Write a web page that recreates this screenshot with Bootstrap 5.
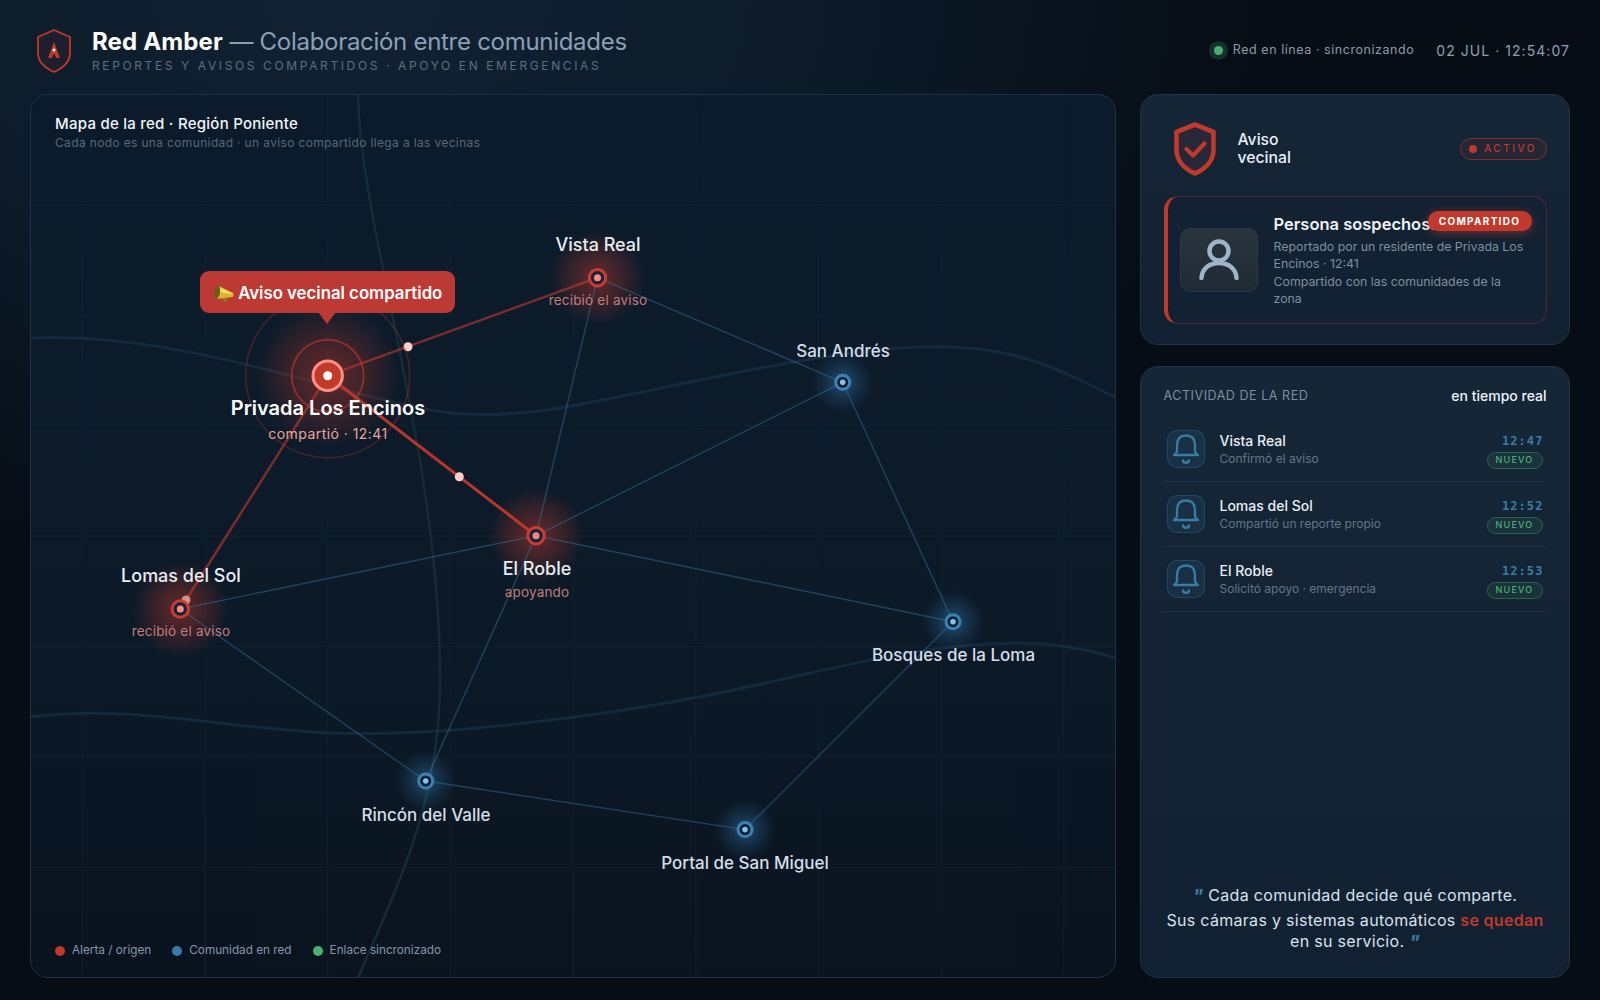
<!DOCTYPE html>
<html lang="es">
<head>
  <meta charset="UTF-8">
  <title>Red Amber</title>
  <link href="https://cdn.jsdelivr.net/npm/bootstrap@5.3.0/dist/css/bootstrap.min.css" rel="stylesheet">
  <style>
    html, body { height: 100%; }
    body {
      font-family: Inter, "Liberation Sans", sans-serif;
      color: #e8eef4;
      background: radial-gradient(ellipse 900px 560px at 22% 0%, #122233 0%, #0c1a28 55%, transparent 100%), #070d15;
      overflow: hidden;
    }
    .shell { width: 1600px; height: 1000px; padding: 0 30px 22px; }
    .topbar { height: 94px; padding-top: 6px; }
    .logo-box { width: 36px; margin: 2px 20px 0 6px; }
    .app-title { font-size: 24px; line-height: 30px; color: #8ba0b6; font-weight: 400; margin: 0; letter-spacing: -.29px; }
    .app-title b { color: #fff; font-weight: 700; letter-spacing: .15px; }
    .app-sub { font-size: 12px; line-height: 16px; letter-spacing: 2.62px; color: #5b6f83; margin-top: 1px; }
    .live-dot { width: 19px; height: 19px; border-radius: 50%; background: rgba(76,175,114,.22); margin-right: 5px; }
    .live-dot::after { content: ""; width: 9px; height: 9px; border-radius: 50%; background: #4caf72; }
    .live-txt { font-size: 12.5px; letter-spacing: .55px; color: #8a9bab; margin-right: 22px; }
    .clock { font-size: 14px; letter-spacing: 1.05px; color: #8fa0b0; }

    .main-row { height: 884px; gap: 24px; }
    .map-panel {
      width: 1086px; height: 884px; position: relative; overflow: hidden;
      border: 1px solid #1d3245; border-radius: 18px;
      background: linear-gradient(180deg, #0d1c2c 0%, #0c1a28 60%, #0a141f 100%);
    }
    .map-svg { position: absolute; left: -1px; top: -1px; width: 1086px; height: 884px; }
    .map-head { position: absolute; left: 24px; top: 18px; }
    .map-title { font-size: 15px; line-height: 22px; font-weight: 500; letter-spacing: .25px; color: #f2f5f8; }
    .map-sub { font-size: 12px; line-height: 16px; letter-spacing: .35px; color: #56687a; }
    .map-legend { position: absolute; left: 24px; bottom: 17px; gap: 21px; font-size: 11.75px; color: #8496a8; }
    .leg-dot { width: 10px; height: 10px; border-radius: 50%; margin-right: 7px; }

    .pin-label { position: absolute; transform: translateX(-50%); text-align: center; white-space: nowrap; }
    .pin-name { font-size: 17px; line-height: 22px; font-weight: 500; color: #d5dee8; }
    .pin-name.hot { font-size: 18px; color: #e8edf3; }
    .pin-name.main { font-size: 20px; line-height: 24px; font-weight: 600; color: #fff; }
    .pin-note { font-size: 13.5px; line-height: 18px; letter-spacing: .2px; color: #c27c7a; }
    .pin-note.main { font-size: 14px; letter-spacing: .45px; color: #e8a5a0; }
    .lb-encinos { left: 297px; top: 301px; }
    .lb-encinos .pin-note { margin-top: 5px; }
    .lb-vista-name { left: 567px; top: 139px; }
    .lb-vista-note { left: 567px; top: 196px; }
    .lb-lomas-name { left: 150px; top: 470px; }
    .lb-lomas-note { left: 150px; top: 527px; }
    .lb-roble { left: 506px; top: 463px; }
    .lb-roble .pin-note { margin-top: 3px; }
    .lb-andres { left: 812px; top: 245px; }
    .lb-bosques { left: 922.5px; top: 549px; }
    .lb-rincon { left: 395px; top: 709px; }
    .lb-portal { left: 714px; top: 757px; }

    .callout {
      position: absolute; left: 169px; top: 176px; width: 255px; height: 41.5px; padding-top: 3px; gap: 4.5px;
      background: #bd3a34; border-radius: 9px; color: #fff;
      font-size: 16.75px; font-weight: 600;
    }
    .callout::after {
      content: ""; position: absolute; left: 118px; top: 41px;
      border-left: 9px solid transparent; border-right: 9px solid transparent; border-top: 12px solid #bd3a34;
    }

    .side-col { width: 430px; gap: 21px; }
    .side-panel { border: 1px solid #1e3549; border-radius: 18px; background: linear-gradient(180deg, #152637 0%, #122132 100%); }
    .alert-panel { height: 251px; padding: 0 22.5px; }
    .alert-top { height: 101px; padding-top: 6px; }
    .shield-box { width: 42px; margin: 0 22px 0 10px; }
    .alert-name { font-size: 15.75px; line-height: 18px; font-weight: 500; color: #e8eef4; }
    .pill-active {
      height: 22px; width: 87px; border: 1px solid #7c2f33; border-radius: 11px; background: rgba(192,57,43,.1);
      font-size: 10px; font-weight: 500; letter-spacing: 2.5px; color: #c0392b;
    }
    .pill-active i { width: 8px; height: 8px; border-radius: 50%; background: #c0392b; margin-right: 7px; }
    .report-box {
      position: relative; height: 128px; border: 1px solid #4d2a31; border-left: 4.3px solid #c0392b; border-radius: 14px;
      padding: 0 12px 0 12px; background: #132233;
    }
    .face-box {
      width: 78px; height: 64px; border-radius: 10px; margin-right: 16px;
      background: linear-gradient(180deg, #29343f, #1f2a35); border: 1px solid #2b3845;
    }
    .report-title { font-size: 16.5px; line-height: 22px; font-weight: 600; color: #eef2f6; margin-bottom: 3px; white-space: nowrap; }
    .report-txt { font-size: 12.35px; line-height: 17.5px; color: #7d8e9f; max-width: 252px; }
    .pill-shared {
      position: absolute; left: 260px; top: 14px; width: 104px; height: 20px; border-radius: 10px;
      background: #c0392b; color: #fff; font-size: 10px; font-weight: 700; letter-spacing: 1.3px;
      box-shadow: 0 2px 10px rgba(192,57,43,.55);
    }

    .feed-panel { height: 612px; padding: 0 22.5px; }
    .feed-head { height: 50px; padding-top: 9px; }
    .feed-label { font-size: 12.5px; letter-spacing: .55px; color: #7d8e9f; }
    .feed-live { font-size: 14px; font-weight: 500; color: #eef2f6; margin-bottom: 2px; }
    .feed-list { margin: 0; padding: 0; list-style: none; }
    .feed-row { height: 65px; border-bottom: 1px solid #1e3346; padding: 0 4px 0 3px; }
    .bell-box {
      width: 38px; height: 38px; border-radius: 10px; margin-right: 15px;
      background: rgba(58,124,165,.14); border: 1px solid rgba(58,124,165,.3);
    }
    .feed-name { font-size: 14px; line-height: 18px; font-weight: 500; color: #e8eef4; }
    .feed-note { font-size: 12px; line-height: 17px; color: #637587; }
    .feed-time { font-family: "DejaVu Sans Mono", "Liberation Mono", monospace; font-size: 12px; line-height: 22px; font-weight: 700; letter-spacing: 1.1px; color: #3a7ca5; text-align: right; margin-right: -1px; }
    .pill-new {
      height: 17px; width: 56px; border-radius: 9px; border: 1px solid #2b6549; background: rgba(76,175,114,.1);
      color: #4caf72; font-size: 9px; font-weight: 500; letter-spacing: 1.2px;
    }
    .quote-box { margin-top: auto; padding-bottom: 25px; text-align: center; font-size: 16px; line-height: 21px; letter-spacing: .3px; color: #d8e2ec; }
    .quote-box .first { margin-bottom: 4px; }
    .quote-box em { color: #3a7ca5; font-size: 19px; font-weight: 700; line-height: 0; vertical-align: -2px; }
    .quote-box strong { color: #c0392b; font-weight: 600; }
  </style>
</head>
<body>
  <svg width="0" height="0" class="position-absolute">
    <symbol id="bell" viewBox="1 1 36 36">
      <path d="M10 21 V15 C10 9 13 5.5 19 5.5 C25 5.5 28 9 28 15 V21 C28 23 30 24 31 25 H7 C8 24 10 23 10 21 Z" fill="none" stroke="#3a7ca5" stroke-width="2.3" stroke-linejoin="round"/>
      <path d="M16 30.5 C16.5 33.5 21.5 33.5 22 30.5" fill="none" stroke="#3a7ca5" stroke-width="2.4" stroke-linecap="round"/>
    </symbol>
  </svg>
  <div class="shell d-flex flex-column">

    <header class="topbar d-flex align-items-center justify-content-between">
      <div class="d-flex align-items-center">
        <div class="logo-box">
          <svg width="36" height="44" viewBox="0 0 36 44">
            <path d="M18 1 L34 8 V24 C34 33 27 39 18 43 C9 39 2 33 2 24 V8 Z" fill="#1e1f2d" stroke="#c0392b" stroke-width="1.8" stroke-linejoin="round"/>
            <path d="M18 13 L23.8 29 H20.3 L18 24.5 L15.7 29 H12.2 Z" fill="#c0392b"/>
            <circle cx="18" cy="21" r="1.5" fill="#fff"/>
          </svg>
        </div>
        <div>
          <h1 class="app-title"><b>Red Amber</b> — Colaboración entre comunidades</h1>
          <div class="app-sub">REPORTES Y AVISOS COMPARTIDOS · APOYO EN EMERGENCIAS</div>
        </div>
      </div>
      <div class="d-flex align-items-center">
        <span class="live-dot d-flex align-items-center justify-content-center"></span>
        <span class="live-txt">Red en línea · sincronizando</span>
        <span class="clock">02 JUL · 12:54:07</span>
      </div>
    </header>

    <div class="main-row d-flex">
      <section class="map-panel">
        <svg class="map-svg" viewBox="0 0 1086 884">
          <defs>
            <radialGradient id="glowRed">
              <stop offset="0" stop-color="#c0392b" stop-opacity=".5"/>
              <stop offset=".55" stop-color="#c0392b" stop-opacity=".24"/>
              <stop offset="1" stop-color="#c0392b" stop-opacity="0"/>
            </radialGradient>
            <radialGradient id="glowBlue">
              <stop offset="0" stop-color="#3a8cc8" stop-opacity=".45"/>
              <stop offset=".55" stop-color="#3a8cc8" stop-opacity=".17"/>
              <stop offset="1" stop-color="#3a8cc8" stop-opacity="0"/>
            </radialGradient>
          </defs>

          <!-- grid -->
          <g stroke="#1a2e40" stroke-width="1" opacity=".34">
            <path d="M52.5 0V884M175 0V884M297.7 0V884M420.4 0V884M543 0V884M665.8 0V884M788.5 0V884M911.2 0V884M1033.9 0V884"/>
            <path d="M0 110.5H1086M0 221H1086M0 331.5H1086M0 442H1086M0 552.5H1086M0 663H1086M0 773.5H1086"/>
          </g>

          <!-- roads -->
          <path d="M328 0 C330 136 410 356 410 586 C410 706 370 786 328 884" fill="none" stroke="#1b3a3c" stroke-width="2.5" opacity=".6"/>
          <path d="M0 244 C100 240 200 265 300 292 S430 325 500 318 S700 275 830 258 S1010 265 1086 304" fill="none" stroke="#1c3d58" stroke-width="3" opacity=".45"/>
          <path d="M0 623 C100 610 200 635 300 639 S560 625 684 600 S880 550 990 549 C1030 549 1060 556 1086 564" fill="none" stroke="#1c3d58" stroke-width="3" opacity=".45"/>

          <!-- glows -->
          <circle cx="297.7" cy="281.7" r="72" fill="url(#glowRed)"/>
          <circle cx="567.5" cy="183.7" r="47" fill="url(#glowRed)"/>
          <circle cx="150.3" cy="515" r="48" fill="url(#glowRed)"/>
          <circle cx="506" cy="441.7" r="48" fill="url(#glowRed)"/>
          <circle cx="812.7" cy="288.3" r="31" fill="url(#glowBlue)"/>
          <circle cx="923" cy="527.7" r="31" fill="url(#glowBlue)"/>
          <circle cx="395.7" cy="687" r="31" fill="url(#glowBlue)"/>
          <circle cx="715" cy="735.6" r="31" fill="url(#glowBlue)"/>

          <!-- links -->
          <g stroke="#3a7ca5" stroke-width="1.4" opacity=".42">
            <line x1="567.5" y1="183.7" x2="812.7" y2="288.3"/>
            <line x1="567.5" y1="183.7" x2="506" y2="441.7"/>
            <line x1="812.7" y1="288.3" x2="506" y2="441.7"/>
            <line x1="812.7" y1="288.3" x2="923" y2="527.7"/>
            <line x1="506" y1="441.7" x2="923" y2="527.7"/>
            <line x1="506" y1="441.7" x2="150.3" y2="515"/>
            <line x1="506" y1="441.7" x2="395.7" y2="687"/>
            <line x1="150.3" y1="515" x2="395.7" y2="687"/>
            <line x1="395.7" y1="687" x2="715" y2="735.6"/>
            <line x1="715" y1="735.6" x2="923" y2="527.7"/>
          </g>
          <line x1="297.7" y1="281.7" x2="567.5" y2="183.7" stroke="#c0392b" stroke-width="2.5" opacity=".62"/>
          <line x1="297.7" y1="281.7" x2="150.3" y2="515" stroke="#c0392b" stroke-width="2.5" opacity=".62"/>
          <line x1="297.7" y1="281.7" x2="506" y2="441.7" stroke="#c0392b" stroke-width="3" opacity=".95"/>
          <circle cx="378" cy="252.7" r="4.5" fill="#ffd0cc"/>
          <circle cx="429.3" cy="382.7" r="4.5" fill="#ffd0cc"/>
          <circle cx="156" cy="506" r="4.5" fill="#ffb0a8" opacity=".75"/>

          <!-- origin node -->
          <circle cx="297.7" cy="281.7" r="82" fill="none" stroke="#c0392b" stroke-width="1.5" opacity=".32"/>
          <circle cx="297.7" cy="281.7" r="36" fill="none" stroke="#c0392b" stroke-width="2" opacity=".6"/>
          <circle cx="297.7" cy="281.7" r="14.7" fill="#c0392b" stroke="#ff8f85" stroke-width="3"/>
          <circle cx="297.7" cy="281.7" r="4.5" fill="#fff"/>

          <!-- red nodes -->
          <g fill="#13263c" stroke="#cf3a30" stroke-width="3">
            <circle cx="567.5" cy="183.7" r="8.2"/>
            <circle cx="150.3" cy="515" r="8.2"/>
            <circle cx="506" cy="441.7" r="8.2"/>
          </g>
          <g fill="#ff8a80">
            <circle cx="567.5" cy="183.7" r="3.5"/>
            <circle cx="150.3" cy="515" r="3.5"/>
            <circle cx="506" cy="441.7" r="3.5"/>
          </g>

          <!-- blue nodes -->
          <g fill="#0e1d2c" stroke="#3a82b5" stroke-width="3">
            <circle cx="812.7" cy="288.3" r="7"/>
            <circle cx="923" cy="527.7" r="7"/>
            <circle cx="395.7" cy="687" r="7"/>
            <circle cx="715" cy="735.6" r="7"/>
          </g>
          <g fill="#7cc6f0">
            <circle cx="812.7" cy="288.3" r="2.8"/>
            <circle cx="923" cy="527.7" r="2.8"/>
            <circle cx="395.7" cy="687" r="2.8"/>
            <circle cx="715" cy="735.6" r="2.8"/>
          </g>
        </svg>

        <div class="map-head">
          <div class="map-title">Mapa de la red · Región Poniente</div>
          <div class="map-sub">Cada nodo es una comunidad · un aviso compartido llega a las vecinas</div>
        </div>

        <div class="callout d-flex align-items-center justify-content-center">
          <svg width="21" height="17" viewBox="0 0 21 17" class="flex-shrink-0">
            <path d="M9 12 L13 11.5 L14.5 16 L11 16.5 Z" fill="#8f7a22"/>
            <path d="M5 0.5 L20 8 C21 9 20.5 11.5 19.5 12 L4 14 Z" fill="#d9b52c"/>
            <path d="M6 2 L20 8.6 L19.5 9.6 L6 7 Z" fill="#f3dc62"/>
            <ellipse cx="4.2" cy="7.2" rx="2.8" ry="6.9" transform="rotate(8 4.2 7.2)" fill="#6e5a1c"/>
          </svg>
          <span>Aviso vecinal compartido</span>
        </div>

        <div class="pin-label lb-encinos"><div class="pin-name main">Privada Los Encinos</div><div class="pin-note main">compartió · 12:41</div></div>
        <div class="pin-label lb-vista-name"><div class="pin-name hot">Vista Real</div></div>
        <div class="pin-label lb-vista-note"><div class="pin-note">recibió el aviso</div></div>
        <div class="pin-label lb-lomas-name"><div class="pin-name hot">Lomas del Sol</div></div>
        <div class="pin-label lb-lomas-note"><div class="pin-note">recibió el aviso</div></div>
        <div class="pin-label lb-roble"><div class="pin-name hot">El Roble</div><div class="pin-note">apoyando</div></div>
        <div class="pin-label lb-andres"><div class="pin-name">San Andrés</div></div>
        <div class="pin-label lb-bosques"><div class="pin-name">Bosques de la Loma</div></div>
        <div class="pin-label lb-rincon"><div class="pin-name">Rincón del Valle</div></div>
        <div class="pin-label lb-portal"><div class="pin-name">Portal de San Miguel</div></div>

        <div class="map-legend d-flex align-items-center">
          <span class="d-flex align-items-center"><i class="leg-dot" style="background:#c0392b"></i>Alerta / origen</span>
          <span class="d-flex align-items-center"><i class="leg-dot" style="background:#3a7ca5"></i>Comunidad en red</span>
          <span class="d-flex align-items-center"><i class="leg-dot" style="background:#4caf72"></i>Enlace sincronizado</span>
        </div>
      </section>

      <aside class="side-col d-flex flex-column">
        <section class="side-panel alert-panel">
          <div class="alert-top d-flex align-items-center justify-content-between">
            <div class="d-flex align-items-center">
              <div class="shield-box">
                <svg width="42" height="54" viewBox="0 0 42 54">
                  <path d="M21 2.5 L39.5 10 V28 C39.5 39 31 47 21 51.5 C11 47 2.5 39 2.5 28 V10 Z" fill="#262838" stroke="#c0392b" stroke-width="4.6" stroke-linejoin="round"/>
                  <path d="M12.5 27 L19 33.5 L30.5 21.5" fill="none" stroke="#c0392b" stroke-width="4.2" stroke-linecap="round" stroke-linejoin="round"/>
                </svg>
              </div>
              <div class="alert-name">Aviso<br>vecinal</div>
            </div>
            <div class="pill-active d-flex align-items-center justify-content-center"><i></i>ACTIVO</div>
          </div>

          <div class="report-box d-flex align-items-center">
            <div class="face-box d-flex align-items-center justify-content-center flex-shrink-0">
              <svg width="44" height="48" viewBox="0 0 44 48">
                <circle cx="22" cy="15" r="9.5" fill="none" stroke="#9fb4c8" stroke-width="4.5"/>
                <path d="M4.5 42 C5 33 12 27 22 27 C32 27 39 33 39.5 42" fill="none" stroke="#9fb4c8" stroke-width="4.5" stroke-linecap="round"/>
              </svg>
            </div>
            <div>
              <div class="report-title">Persona sospechosa</div>
              <div class="report-txt">Reportado por un residente de Privada Los Encinos · 12:41<br>Compartido con las comunidades de la zona</div>
            </div>
            <div class="pill-shared d-flex align-items-center justify-content-center">COMPARTIDO</div>
          </div>
        </section>

        <section class="side-panel feed-panel d-flex flex-column">
          <div class="feed-head d-flex align-items-center justify-content-between">
            <span class="feed-label">ACTIVIDAD DE LA RED</span>
            <span class="feed-live">en tiempo real</span>
          </div>
          <ul class="feed-list">
            <li class="feed-row d-flex align-items-center">
              <div class="bell-box d-flex align-items-center justify-content-center flex-shrink-0"><svg width="36" height="36"><use href="#bell"/></svg></div>
              <div class="flex-grow-1">
                <div class="feed-name">Vista Real</div>
                <div class="feed-note">Confirmó el aviso</div>
              </div>
              <div class="d-flex flex-column align-items-end">
                <div class="feed-time">12:47</div>
                <div class="pill-new d-flex align-items-center justify-content-center">NUEVO</div>
              </div>
            </li>
            <li class="feed-row d-flex align-items-center">
              <div class="bell-box d-flex align-items-center justify-content-center flex-shrink-0"><svg width="36" height="36"><use href="#bell"/></svg></div>
              <div class="flex-grow-1">
                <div class="feed-name">Lomas del Sol</div>
                <div class="feed-note">Compartió un reporte propio</div>
              </div>
              <div class="d-flex flex-column align-items-end">
                <div class="feed-time">12:52</div>
                <div class="pill-new d-flex align-items-center justify-content-center">NUEVO</div>
              </div>
            </li>
            <li class="feed-row d-flex align-items-center">
              <div class="bell-box d-flex align-items-center justify-content-center flex-shrink-0"><svg width="36" height="36"><use href="#bell"/></svg></div>
              <div class="flex-grow-1">
                <div class="feed-name">El Roble</div>
                <div class="feed-note">Solicitó apoyo · emergencia</div>
              </div>
              <div class="d-flex flex-column align-items-end">
                <div class="feed-time">12:53</div>
                <div class="pill-new d-flex align-items-center justify-content-center">NUEVO</div>
              </div>
            </li>
          </ul>
          <div class="quote-box">
            <div class="first"><em>"</em> Cada comunidad decide qué comparte.</div>
            <div>Sus cámaras y sistemas automáticos <strong>se quedan</strong> en su servicio. <em>"</em></div>
          </div>
        </section>
      </aside>
    </div>
  </div>
  <script src="https://cdn.jsdelivr.net/npm/bootstrap@5.3.0/dist/js/bootstrap.bundle.min.js"></script>
</body>
</html>
